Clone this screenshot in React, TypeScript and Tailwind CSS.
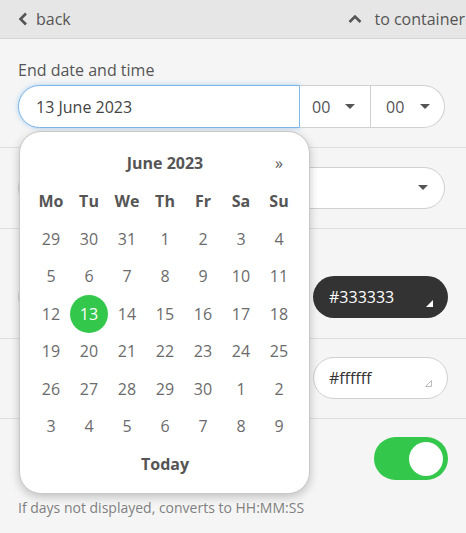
import React from "react";

const weeks = [
  [29, 30, 31, 1, 2, 3, 4],
  [5, 6, 7, 8, 9, 10, 11],
  [12, 13, 14, 15, 16, 17, 18],
  [19, 20, 21, 22, 23, 24, 25],
  [26, 27, 28, 29, 30, 1, 2],
  [3, 4, 5, 6, 7, 8, 9],
];
const days = ["Mo", "Tu", "We", "Th", "Fr", "Sa", "Su"];

function Caret() {
  return (
    <svg width="10" height="6" viewBox="0 0 10 6">
      <path d="M0 0 L10 0 L5 5 Z" fill="#555" />
    </svg>
  );
}

function Resize({ dark }: { dark?: boolean }) {
  return (
    <svg width="9" height="9" viewBox="0 0 9 9" className="absolute right-[14px] bottom-[10px]">
      {dark ? (
        <path d="M8 1 L8 8 L1 8 Z" fill="#fff" />
      ) : (
        <path d="M7.5 1.5 L7.5 7.5 L1.5 7.5 Z" fill="none" stroke="#bbb" strokeWidth="1" strokeLinejoin="round" />
      )}
    </svg>
  );
}

export default function App() {
  return (
    <div
      className="relative w-[466px] h-[533px] overflow-hidden bg-[#f5f5f5] text-[#555]"
      style={{ fontFamily: '"Open Sans", "Noto Sans", sans-serif' }}
    >
      {/* header */}
      <div className="h-[39px] bg-[#e6e6e6] border-b border-[#d6d6d6] flex items-center justify-between pl-[18px] text-[16px] text-[#555]">
        <div className="flex items-center gap-[8px]">
          <svg width="10" height="14" viewBox="0 0 10 14">
            <path d="M8 1.5 L2.5 7 L8 12.5" fill="none" stroke="#555" strokeWidth="2.6" />
          </svg>
          <span>back</span>
        </div>
        <div className="flex items-center gap-[12px] mr-[1px]">
          <svg width="14" height="10" viewBox="0 0 14 10">
            <path d="M1.5 8 L7 2.5 L12.5 8" fill="none" stroke="#555" strokeWidth="2.6" />
          </svg>
          <span>to container</span>
        </div>
      </div>

      {/* section 1 */}
      <div className="h-[109px] border-b border-[#dedede] px-[18px] pt-[20px]">
        <div className="text-[16px] leading-[22px] text-[#555]">End date and time</div>
        <div className="mt-[4px] flex h-[43px] w-[427px]">
          <div className="flex-1 flex items-center pl-[17px] bg-white border border-[#7db6e8] rounded-l-full shadow-[0_0_5px_rgba(80,160,230,0.45)] text-[16px] text-[#444]">
            13 June 2023
          </div>
          <div className="w-[71px] flex items-center justify-between pl-[12px] pr-[15px] bg-white border-y border-[#d0d0d0] border-r text-[16px] text-[#555]">
            <span>00</span>
            <Caret />
          </div>
          <div className="w-[74px] flex items-center justify-between pl-[15px] pr-[14px] bg-white border-y border-r border-[#d0d0d0] rounded-r-full text-[16px] text-[#555]">
            <span>00</span>
            <Caret />
          </div>
        </div>
      </div>

      {/* section 2 */}
      <div className="h-[81px] border-b border-[#dedede] px-[18px] pt-[19px]">
        <div className="h-[42px] w-[427px] bg-white border border-[#d0d0d0] rounded-full flex items-center justify-end pr-[16px]">
          <Caret />
        </div>
      </div>

      {/* section 3 */}
      <div className="h-[110px] border-b border-[#dedede] px-[18px] pt-[47px] flex justify-between">
        <div className="h-[42px] w-[200px] bg-white border border-[#d0d0d0] rounded-full" />
        <div className="relative h-[42px] w-[135px] bg-[#333333] rounded-full flex items-center pl-[16px] text-[16px] text-white">
          #333333
          <Resize dark />
        </div>
      </div>

      {/* section 4 */}
      <div className="h-[80px] border-b border-[#dedede] px-[18px] pt-[18px] flex justify-between">
        <div className="h-[42px] w-[200px]" />
        <div className="relative h-[42px] w-[135px] bg-white border border-[#d0d0d0] rounded-full flex items-center pl-[15px] text-[16px] text-[#333]">
          #ffffff
          <Resize />
        </div>
      </div>

      {/* section 5 */}
      <div className="px-[18px] pt-[18px]">
        <div className="flex justify-end">
          <div className="w-[74px] h-[43px] rounded-full bg-[#33c84b] flex items-center justify-end pr-[5px]">
            <div className="w-[34px] h-[34px] rounded-full bg-white" />
          </div>
        </div>
        <div className="mt-[19px] text-[14px] leading-[18px] text-[#808080]">
          If days not displayed, converts to HH:MM:SS
        </div>
      </div>

      {/* popup calendar */}
      <div className="absolute left-[19px] top-[131px] w-[291px] h-[363px] bg-white rounded-[22px] border border-[#c8c8c8] shadow-[0_3px_10px_rgba(0,0,0,0.22)] pl-[12px] pr-[11px] pt-[12px]">
        <div className="grid grid-cols-7 h-[38px] items-center">
          <div />
          <div className="col-span-5 text-center font-bold text-[16px] text-[#555]">June 2023</div>
          <div className="text-center text-[16px] text-[#555]">»</div>
        </div>
        <div className="grid grid-cols-7 h-[38px] items-center">
          {days.map((d) => (
            <div key={d} className="text-center font-bold text-[16px] text-[#555]">
              {d}
            </div>
          ))}
        </div>
        {weeks.map((w, i) => (
          <div key={i} className="grid grid-cols-7 h-[37.5px] items-center">
            {w.map((n, j) => (
              <div key={j} className="flex justify-center">
                {i === 2 && n === 13 ? (
                  <div className="w-[38px] h-[38px] rounded-full bg-[#33c84b] text-white flex items-center justify-center text-[16px]">
                    13
                  </div>
                ) : (
                  <span className="text-[16px] text-[#6b6b6b]">{n}</span>
                )}
              </div>
            ))}
          </div>
        ))}
        <div className="h-[38px] flex items-center justify-center font-bold text-[16px] text-[#555]">Today</div>
      </div>
    </div>
  );
}
